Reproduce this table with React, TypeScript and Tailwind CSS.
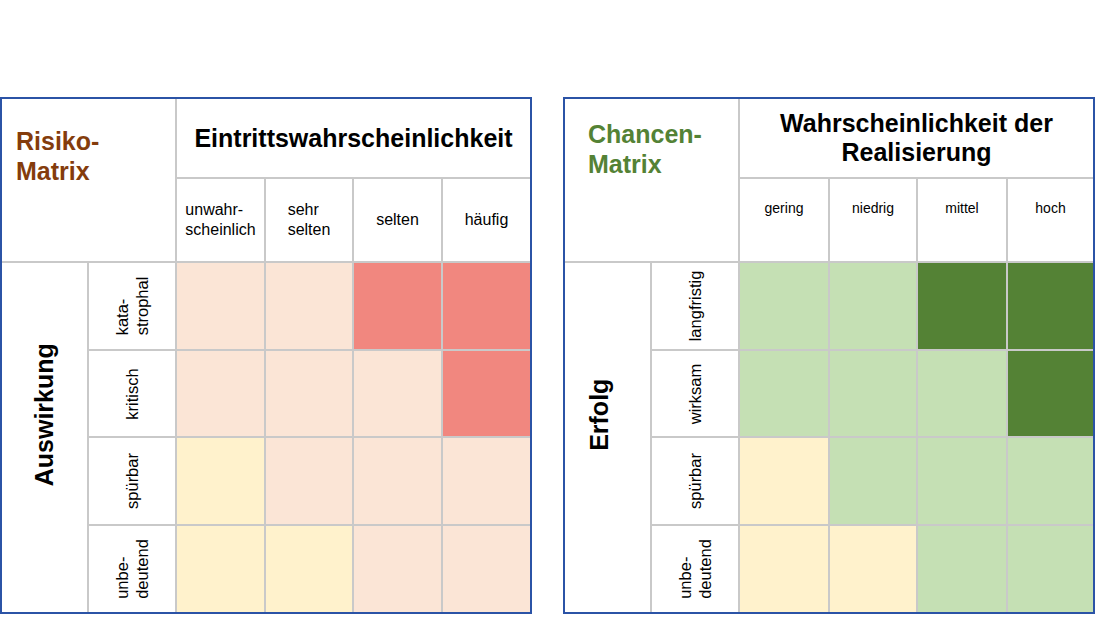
import React from "react";

// cell fills
const PEACH = "bg-[#fbe5d6]";
const RED = "bg-[#f1877f]";
const YELLOW = "bg-[#fff2cc]";
const LGREEN = "bg-[#c5e0b4]";
const DGREEN = "bg-[#548235]";

type MatrixProps = {
  cols: string;
  title: string[];
  titleClass: string;
  heading: string[];
  colLabels: string[][];
  colLabelCell: string;
  axis: string;
  axisCell: string;
  rowLabels: string[][];
  cells: string[][];
};

function Lines({ lines }: { lines: string[] }) {
  return (
    <>
      {lines.map((l, i) => (
        <React.Fragment key={i}>
          {i > 0 && <br />}
          {l}
        </React.Fragment>
      ))}
    </>
  );
}

function Matrix(p: MatrixProps) {
  return (
    <div
      className={`grid ${p.cols} grid-rows-[78px_82px_86px_85px_86px_86px] gap-[2px] border-2 border-[#2b53a6] bg-[#c9c9c9]`}
    >
      {/* Title */}
      <div className={`col-span-2 row-span-2 bg-white text-[25px] font-bold leading-[30px] ${p.titleClass}`}>
        <Lines lines={p.title} />
      </div>

      {/* Heading */}
      <div className="col-span-4 flex items-center justify-center bg-white text-center text-[25px] font-bold leading-[29px] text-black">
        <div>
          <Lines lines={p.heading} />
        </div>
      </div>

      {/* Column labels */}
      {p.colLabels.map((c, i) => (
        <div key={i} className={p.colLabelCell}>
          <div className="text-left">
            <Lines lines={c} />
          </div>
        </div>
      ))}

      {/* Rows */}
      {p.rowLabels.map((r, ri) => (
        <React.Fragment key={ri}>
          {ri === 0 && (
            <div className={p.axisCell}>
              <div className="-rotate-90 whitespace-nowrap text-[25px] font-bold text-black">{p.axis}</div>
            </div>
          )}
          <div className="flex items-center justify-center bg-white">
            <div className="-rotate-90 whitespace-nowrap text-left text-[16.5px] leading-[20px] text-black">
              <Lines lines={r} />
            </div>
          </div>
          {p.cells[ri].map((c, ci) => (
            <div key={ci} className={c} />
          ))}
        </React.Fragment>
      ))}
    </div>
  );
}

export default function App() {
  return (
    <div className="flex h-[619px] w-[1100px] items-start gap-[31px] bg-white pt-[97px] font-['Liberation_Sans',Arial,sans-serif]">
      <Matrix
        cols="grid-cols-[85px_86px_87px_86px_87px_87px]"
        title={["Risiko-", "Matrix"]}
        titleClass="pl-[14px] pt-[27px] text-[#843c0c]"
        heading={["Eintrittswahrscheinlichkeit"]}
        colLabels={[["unwahr-", "scheinlich"], ["sehr", "selten"], ["selten"], ["häufig"]]}
        colLabelCell="flex items-center justify-center bg-white text-[16px] leading-[20px] text-black"
        axis="Auswirkung"
        axisCell="row-span-4 flex items-center justify-center bg-white pb-[46px]"
        rowLabels={[["kata-", "strophal"], ["kritisch"], ["spürbar"], ["unbe-", "deutend"]]}
        cells={[
          [PEACH, PEACH, RED, RED],
          [PEACH, PEACH, PEACH, RED],
          [YELLOW, PEACH, PEACH, PEACH],
          [YELLOW, YELLOW, PEACH, PEACH],
        ]}
      />
      <Matrix
        cols="grid-cols-[85px_86px_88px_86px_88px_85px]"
        title={["Chancen-", "Matrix"]}
        titleClass="pl-[23px] pt-[20px] text-[#548235]"
        heading={["Wahrscheinlichkeit der", "Realisierung"]}
        colLabels={[["gering"], ["niedrig"], ["mittel"], ["hoch"]]}
        colLabelCell="flex justify-center bg-white pt-[19px] text-[14px] leading-[20px] text-black"
        axis="Erfolg"
        axisCell="row-span-4 flex items-center justify-center bg-white pb-[46px] pr-[14px]"
        rowLabels={[["langfristig"], ["wirksam"], ["spürbar"], ["unbe-", "deutend"]]}
        cells={[
          [LGREEN, LGREEN, DGREEN, DGREEN],
          [LGREEN, LGREEN, LGREEN, DGREEN],
          [YELLOW, LGREEN, LGREEN, LGREEN],
          [YELLOW, YELLOW, LGREEN, LGREEN],
        ]}
      />
    </div>
  );
}
